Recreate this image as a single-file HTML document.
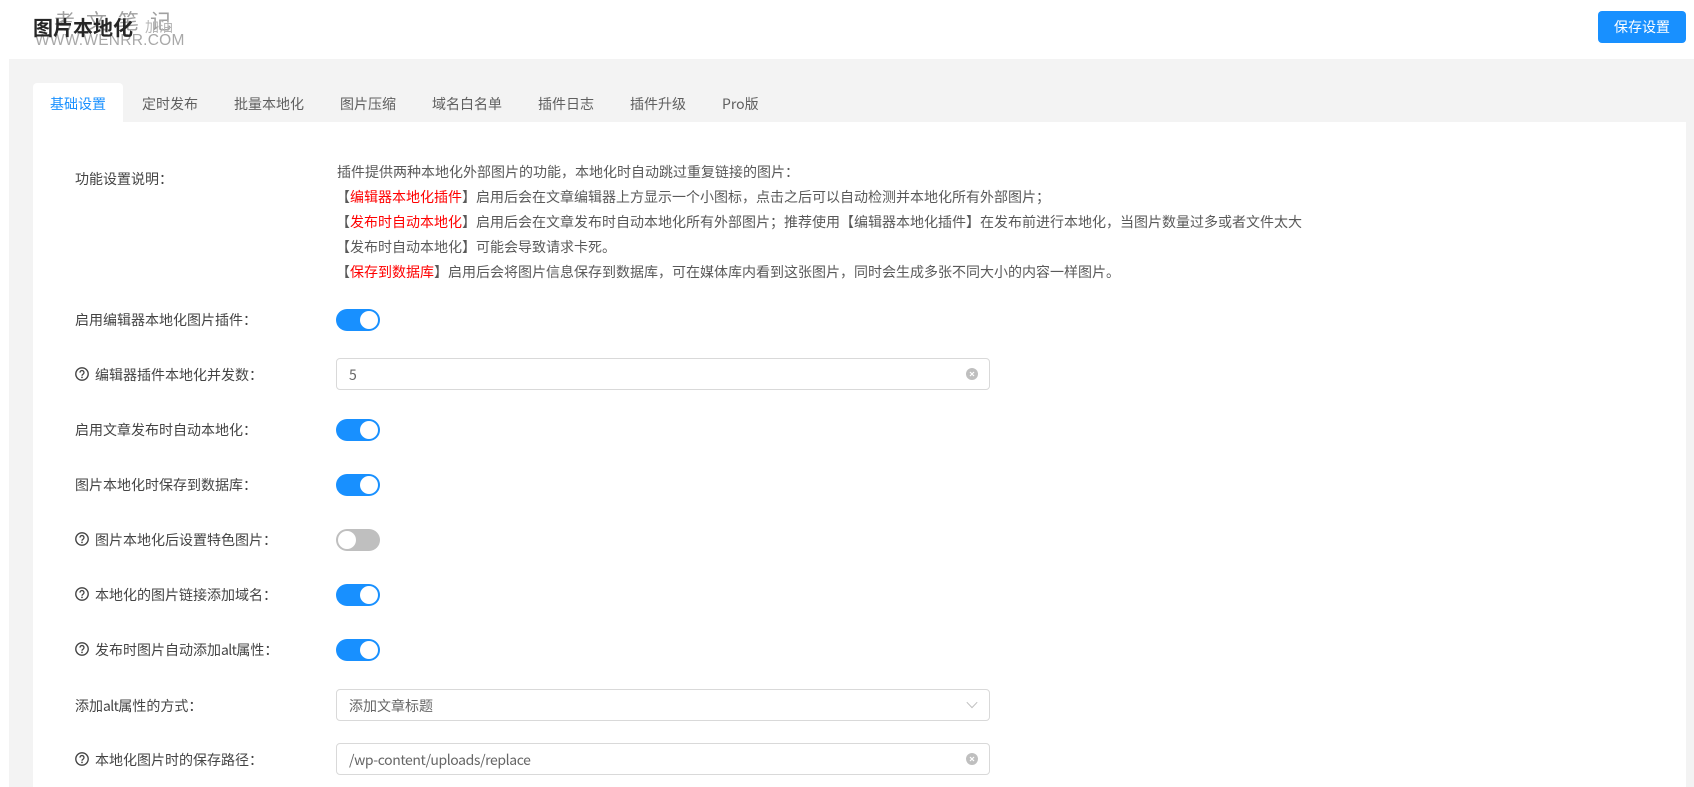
<!DOCTYPE html>
<html lang="zh-CN"><head><meta charset="utf-8"><title>图片本地化</title>
<style>
html,body{margin:0;padding:0;width:1694px;height:787px;overflow:hidden;background:#fff}
body{position:relative;font-family:"Noto Sans CJK SC","Liberation Sans",sans-serif;font-size:14px;color:#595959}
.a{position:absolute;white-space:nowrap;line-height:20px}
.bg{position:absolute;left:9px;top:59px;width:1685px;height:728px;background:#f3f3f3}
.card{position:absolute;left:33px;top:122px;width:1653px;height:665px;background:#fff}
.tabon{position:absolute;left:33px;top:83px;width:90px;height:40px;background:#fff;border-radius:4px 4px 0 0}
.tab{top:94px;color:#5f5f5f}
.lb{color:#444}
.lb em{font-style:normal;letter-spacing:-.6px}
.d{left:337px;color:#595959;line-height:25px}
.d b{font-weight:400;color:#f00}
.sw{position:absolute;left:336px;width:44px;height:22px;border-radius:11px;background:#1890ff}
.sw i{position:absolute;right:2px;top:2px;width:18px;height:18px;border-radius:50%;background:#fff}
.sw.off{background:#bfbfbf}
.sw.off i{right:auto;left:2px}
.in{position:absolute;left:336px;width:652px;height:30px;border:1px solid #d9d9d9;border-radius:4px;background:#fff;line-height:30px;color:#666;box-sizing:content-box}
.in span{position:absolute;left:12px;top:1px}
.in svg{position:absolute;right:11px;top:9px}
.q{position:absolute;left:75px}
</style></head><body>
<div class="bg"></div>
<div class="card"></div>
<div class="tabon"></div>

<div class="a" style="left:54px;top:9px;font-size:21px;line-height:24px;color:#a0a0a0;letter-spacing:11px">考文笔记</div>
<div class="a" style="left:145px;top:17px;font-size:14px;color:#b5b5b5">加油</div>
<div class="a" style="left:35px;top:31px;font-family:'Liberation Sans',sans-serif;font-size:15.5px;color:#a8a8a8;letter-spacing:.25px">WWW.WENRR.COM</div>
<div class="a" style="left:33px;top:14px;font-size:20px;line-height:26px;font-weight:700;color:#262626">图片本地化</div>
<div style="position:absolute;left:1598px;top:11px;width:88px;height:32px;border-radius:4px;background:#1890ff;color:#fff;text-align:center;line-height:32px">保存设置</div>

<div class="a tab" style="left:50px;color:#1890ff">基础设置</div>
<div class="a tab" style="left:142px">定时发布</div>
<div class="a tab" style="left:234px">批量本地化</div>
<div class="a tab" style="left:340px">图片压缩</div>
<div class="a tab" style="left:432px">域名白名单</div>
<div class="a tab" style="left:538px">插件日志</div>
<div class="a tab" style="left:630px">插件升级</div>
<div class="a tab" style="left:722px">Pro版</div>

<div class="a lb" style="left:75px;top:169px">功能设置说明：</div>
<div class="a d" style="top:160px">插件提供两种本地化外部图片的功能，本地化时自动跳过重复链接的图片：</div>
<div class="a d" style="top:185px;left:336px">【<b>编辑器本地化插件</b>】启用后会在文章编辑器上方显示一个小图标，点击之后可以自动检测并本地化所有外部图片；</div>
<div class="a d" style="top:210px;left:336px">【<b>发布时自动本地化</b>】启用后会在文章发布时自动本地化所有外部图片；推荐使用【编辑器本地化插件】在发布前进行本地化，当图片数量过多或者文件太大</div>
<div class="a d" style="top:235px;left:336px">【发布时自动本地化】可能会导致请求卡死。</div>
<div class="a d" style="top:260px;left:336px">【<b>保存到数据库</b>】启用后会将图片信息保存到数据库，可在媒体库内看到这张图片，同时会生成多张不同大小的内容一样图片。</div>

<div class="a lb" style="left:75px;top:310px">启用编辑器本地化图片插件：</div>
<div class="sw" style="top:309px"><i></i></div>

<svg class="q" style="top:367px" width="14" height="14" viewBox="0 0 14 14"><circle cx="7" cy="7" r="6.2" fill="none" stroke="#444" stroke-width="1.4"/><path d="M5 5.6a2 2 0 1 1 3.1 1.6c-.7.4-1.1.8-1.1 1.5" fill="none" stroke="#444" stroke-width="1.3"/><circle cx="7" cy="10.4" r=".85" fill="#444"/></svg>
<div class="a lb" style="left:95px;top:365px">编辑器插件本地化并发数：</div>
<div class="in" style="top:358px"><span>5</span><svg width="12" height="12" viewBox="0 0 12 12"><circle cx="6" cy="6" r="6" fill="#bfbfbf"/><path d="M4 4l4 4M8 4l-4 4" stroke="#fff" stroke-width="1.2"/></svg></div>

<div class="a lb" style="left:75px;top:420px">启用文章发布时自动本地化：</div>
<div class="sw" style="top:419px"><i></i></div>

<div class="a lb" style="left:75px;top:475px">图片本地化时保存到数据库：</div>
<div class="sw" style="top:474px"><i></i></div>

<svg class="q" style="top:532px" width="14" height="14" viewBox="0 0 14 14"><circle cx="7" cy="7" r="6.2" fill="none" stroke="#444" stroke-width="1.4"/><path d="M5 5.6a2 2 0 1 1 3.1 1.6c-.7.4-1.1.8-1.1 1.5" fill="none" stroke="#444" stroke-width="1.3"/><circle cx="7" cy="10.4" r=".85" fill="#444"/></svg>
<div class="a lb" style="left:95px;top:530px">图片本地化后设置特色图片：</div>
<div class="sw off" style="top:529px"><i></i></div>

<svg class="q" style="top:587px" width="14" height="14" viewBox="0 0 14 14"><circle cx="7" cy="7" r="6.2" fill="none" stroke="#444" stroke-width="1.4"/><path d="M5 5.6a2 2 0 1 1 3.1 1.6c-.7.4-1.1.8-1.1 1.5" fill="none" stroke="#444" stroke-width="1.3"/><circle cx="7" cy="10.4" r=".85" fill="#444"/></svg>
<div class="a lb" style="left:95px;top:585px">本地化的图片链接添加域名：</div>
<div class="sw" style="top:584px"><i></i></div>

<svg class="q" style="top:642px" width="14" height="14" viewBox="0 0 14 14"><circle cx="7" cy="7" r="6.2" fill="none" stroke="#444" stroke-width="1.4"/><path d="M5 5.6a2 2 0 1 1 3.1 1.6c-.7.4-1.1.8-1.1 1.5" fill="none" stroke="#444" stroke-width="1.3"/><circle cx="7" cy="10.4" r=".85" fill="#444"/></svg>
<div class="a lb" style="left:95px;top:640px">发布时图片自动添加<em>alt</em>属性：</div>
<div class="sw" style="top:639px"><i></i></div>

<div class="a lb" style="left:75px;top:696px">添加<em>alt</em>属性的方式：</div>
<div class="in" style="top:689px"><span>添加文章标题</span><svg width="12" height="12" viewBox="0 0 12 12" style="top:9px"><path d="M.8 3.2L6 8.6l5.2-5.4" fill="none" stroke="#bfbfbf" stroke-width="1"/></svg></div>

<svg class="q" style="top:752px" width="14" height="14" viewBox="0 0 14 14"><circle cx="7" cy="7" r="6.2" fill="none" stroke="#444" stroke-width="1.4"/><path d="M5 5.6a2 2 0 1 1 3.1 1.6c-.7.4-1.1.8-1.1 1.5" fill="none" stroke="#444" stroke-width="1.3"/><circle cx="7" cy="10.4" r=".85" fill="#444"/></svg>
<div class="a lb" style="left:95px;top:750px">本地化图片时的保存路径：</div>
<div class="in" style="top:743px"><span style="letter-spacing:-.4px">/wp-content/uploads/replace</span><svg width="12" height="12" viewBox="0 0 12 12"><circle cx="6" cy="6" r="6" fill="#bfbfbf"/><path d="M4 4l4 4M8 4l-4 4" stroke="#fff" stroke-width="1.2"/></svg></div>
</body></html>
